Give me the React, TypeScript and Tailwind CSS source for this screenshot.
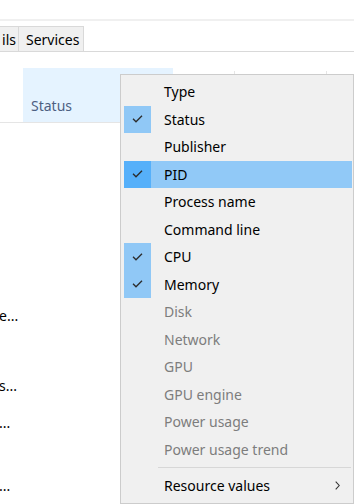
import React from "react";

type Item = { label: string; checked?: boolean; disabled?: boolean; hover?: boolean };

const items: Item[] = [
  { label: "Type" },
  { label: "Status", checked: true },
  { label: "Publisher" },
  { label: "PID", checked: true, hover: true },
  { label: "Process name" },
  { label: "Command line" },
  { label: "CPU", checked: true },
  { label: "Memory", checked: true },
  { label: "Disk", disabled: true },
  { label: "Network", disabled: true },
  { label: "GPU", disabled: true },
  { label: "GPU engine", disabled: true },
  { label: "Power usage", disabled: true },
  { label: "Power usage trend", disabled: true },
];

function Check() {
  return (
    <svg width="11" height="8" viewBox="0 0 11 8" fill="none">
      <path d="M1 3.8 L4 6.8 L10 0.8" stroke="#2b2b2b" strokeWidth="1.3" />
    </svg>
  );
}

function Chevron() {
  return (
    <svg width="5" height="9" viewBox="0 0 5 9" fill="none">
      <path d="M0.7 0.7 L4.2 4.5 L0.7 8.3" stroke="#333" strokeWidth="1.1" />
    </svg>
  );
}

export default function App() {
  return (
    <div
      className="relative w-[354px] h-[504px] overflow-hidden bg-white text-black"
      style={{ fontFamily: '"Noto Sans", "Open Sans", sans-serif' }}
    >
      {/* top area */}
      <div className="h-[19px]" />
      <div className="h-[2px] bg-[#f0f0f0]" />
      <div className="h-[5px]" />
      {/* tabs */}
      <div className="flex h-[26px] border-b border-[#d9d9d9] text-[14px]">
        <div className="flex items-center justify-end w-[19px] bg-[#f0f0f0] border-r border-t border-[#d9d9d9] pr-[2px] overflow-hidden whitespace-nowrap">
          ils
        </div>
        <div className="flex items-center px-[7px] w-[65px] bg-[#f0f0f0] border-r border-t border-[#d9d9d9]">
          Services
        </div>
      </div>
      <div className="h-[16px]" />
      {/* column header */}
      <div className="flex h-[55px] border-b border-[#e5e5e5] text-[14px]">
        <div className="w-[23px]" />
        <div className="w-[150px] bg-[#e5f3ff] flex items-end pl-[8px] pb-[6px] text-[#4d6082]">Status</div>
        <div className="w-[62px] flex justify-end">
          <div className="w-px mt-[3px] bg-[#e5e5e5]" />
        </div>
        <div className="w-[92px] flex justify-end">
          <div className="w-px mt-[3px] bg-[#e5e5e5]" />
        </div>
        <div className="flex-1" />
      </div>
      {/* body rows */}
      <div className="flex flex-col text-[14px] whitespace-nowrap">
        <div className="h-[181px]" />
        <div className="h-[22px] flex items-center -ml-[1px]">e...</div>
        <div className="h-[48px]" />
        <div className="h-[22px] flex items-center -ml-[1px]">s...</div>
        <div className="h-[15px]" />
        <div className="h-[22px] flex items-center -ml-[1px]">...</div>
        <div className="h-[41px]" />
        <div className="h-[22px] flex items-center -ml-[1px]">...</div>
      </div>

      {/* context menu */}
      <div className="absolute left-[120px] top-[74px] w-[234px] h-[430px] bg-[#f0f0f0] border border-[#cccccc] pt-[3px] pl-[3px] pr-[1px] text-[14px]">
        {items.map((it) => (
          <div
            key={it.label}
            className={
              "flex items-center h-[27.5px] " + (it.hover ? "bg-[#91c9f7]" : "")
            }
          >
            <div
              className={
                "w-[27px] h-full flex items-center justify-center " +
                (it.checked ? (it.hover ? "bg-[#56b0fa]" : "bg-[#90c8f6]") : "")
              }
            >
              {it.checked ? <Check /> : null}
            </div>
            <div className={"ml-[13px] " + (it.disabled ? "text-[#7d7d7d]" : "text-black")}>
              {it.label}
            </div>
          </div>
        ))}
        <div className="h-[8px] flex items-center pl-[34px] pr-[1px]">
          <div className="h-px w-full bg-[#d7d7d7]" />
        </div>
        <div className="flex items-center h-[28px]">
          <div className="w-[27px]" />
          <div className="ml-[13px] flex-1">Resource values</div>
          <div className="w-[17px] flex items-center">
            <Chevron />
          </div>
        </div>
      </div>
    </div>
  );
}
